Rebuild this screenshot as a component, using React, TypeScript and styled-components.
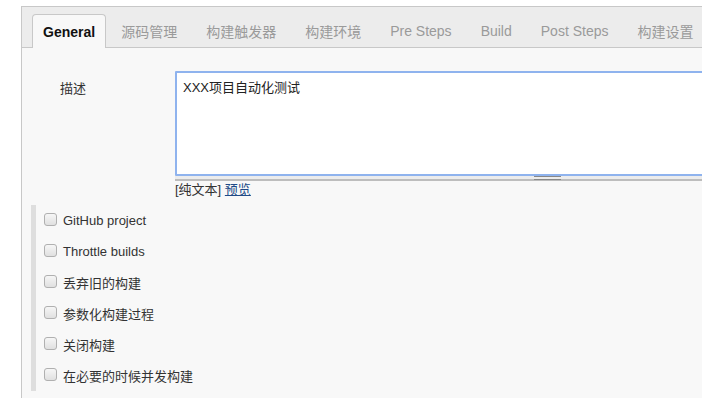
import React, { useState } from 'react';
import styled, { createGlobalStyle } from 'styled-components';

const GlobalStyle = createGlobalStyle`
  html, body {
    margin: 0;
    padding: 0;
    background: #ffffff;
    font-family: "Liberation Sans", "Noto Sans CJK SC", sans-serif;
    overflow: hidden;
  }
`;

const Page = styled.div`
  padding: 6px 0 0 21px;
  width: 702px;
  height: 398px;
  box-sizing: border-box;
  overflow: hidden;
`;

const Panel = styled.div`
  width: 720px;
  height: 420px;
  border: 1px solid #c8c8c8;
  border-right: none;
  background: #f8f8f8;
  display: flex;
  flex-direction: column;
`;

const TabBar = styled.div`
  display: flex;
  align-items: flex-end;
  height: 41px;
  padding-left: 10px;
  background: #ececec;
  border-bottom: 1px solid #c8c8c8;
  box-sizing: border-box;
`;

const Tab = styled.div<{ $active?: boolean }>`
  box-sizing: border-box;
  padding: 0 ${p => (p.$active ? '10px' : '13px')} 0 ${p => (p.$active ? '10px' : '14px')};
  display: flex;
  align-items: center;
  font-size: 14px;
  white-space: nowrap;
  color: ${p => (p.$active ? '#111' : '#9a9a9a')};
  font-weight: ${p => (p.$active ? 'bold' : 'normal')};
  background: ${p => (p.$active ? '#f8f8f8' : 'transparent')};
  border: 1px solid ${p => (p.$active ? '#c8c8c8' : 'transparent')};
  border-bottom: none;
  border-radius: 4px 4px 0 0;
  margin-bottom: ${p => (p.$active ? '-1px' : '0')};
  height: ${p => (p.$active ? '34px' : '33px')};
`;

const Body = styled.div`
  padding: 23px 0 0 9px;
`;

const FieldRow = styled.div`
  display: grid;
  grid-template-columns: 115px 1fr;
  padding-left: 29px;
`;

const Label = styled.div`
  font-size: 13px;
  color: #333;
  padding-top: 7px;
`;

const Editor = styled.div`
  display: flex;
  flex-direction: column;
`;

const TextArea = styled.textarea`
  width: 560px;
  height: 105px;
  box-sizing: border-box;
  border: 2px solid #8fb3ee;
  border-radius: 1px;
  padding: 4px 6px;
  font-family: "Liberation Sans", "Noto Sans CJK SC", sans-serif;
  font-size: 13px;
  color: #222;
  background: #fff;
  resize: none;
  outline: none;
  display: block;
`;

const Grip = styled.div`
  height: 3px;
  width: 560px;
  background: #ececec;
  border-bottom: 2px solid #bdbdbd;
  position: relative;
  &::after {
    content: '';
    position: absolute;
    left: 359px;
    top: 0;
    width: 27px;
    height: 4px;
    border-top: 1px solid #888;
    border-bottom: 1px solid #888;
    box-sizing: border-box;
  }
`;

const Format = styled.div`
  font-size: 13px;
  line-height: 15px;
  color: #333;
  margin-top: 1px;
  a {
    color: #204a87;
    text-decoration: underline;
  }
`;

const Options = styled.div`
  margin: 8px 0 0 0;
  border-left: 5px solid #dedede;
  padding: 0 0 0 8px;
  display: flex;
  flex-direction: column;
`;

const Option = styled.label`
  height: 31px;
  display: flex;
  align-items: center;
  gap: 6px;
  font-size: 13px;
  color: #333;
`;

const Box = styled.span`
  width: 13px;
  height: 13px;
  border: 1px solid #b0b0b0;
  border-radius: 3px;
  background: linear-gradient(#f6f6f6, #e0e0e0);
  box-sizing: border-box;
  margin-top: -3px;
`;

const tabs = ['General', '源码管理', '构建触发器', '构建环境', 'Pre Steps', 'Build', 'Post Steps', '构建设置'];
const options = ['GitHub project', 'Throttle builds', '丢弃旧的构建', '参数化构建过程', '关闭构建', '在必要的时候并发构建'];

export default function App() {
  const [desc, setDesc] = useState('XXX项目自动化测试');
  return (
    <Page>
      <GlobalStyle />
      <Panel>
        <TabBar>
          {tabs.map((t, i) => (
            <Tab key={t} $active={i === 0}>{t}</Tab>
          ))}
        </TabBar>
        <Body>
          <FieldRow>
            <Label>描述</Label>
            <Editor>
              <TextArea value={desc} onChange={e => setDesc(e.currentTarget.value)} />
              <Grip />
              <Format>[纯文本] <a href="#">预览</a></Format>
            </Editor>
          </FieldRow>
          <Options>
            {options.map(o => (
              <Option key={o}>
                <Box />
                {o}
              </Option>
            ))}
          </Options>
        </Body>
      </Panel>
    </Page>
  );
}
